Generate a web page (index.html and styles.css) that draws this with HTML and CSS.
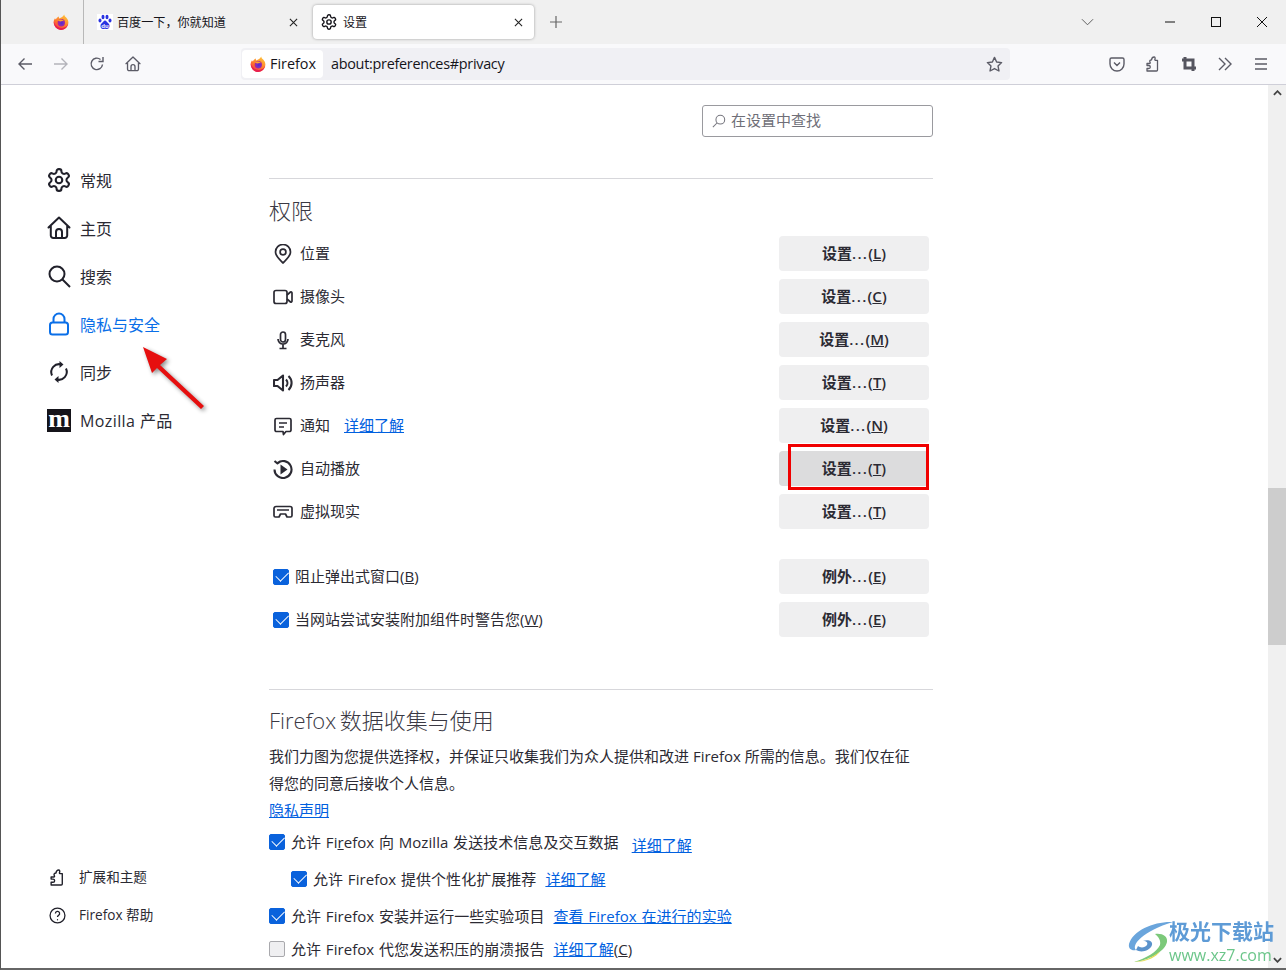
FILE: index.html
```html
<!DOCTYPE html>
<html lang="zh-CN">
<head>
<meta charset="utf-8">
<title>设置</title>
<link rel="stylesheet" href="styles.css">
</head>
<body>
<svg class="defs" width="0" height="0" aria-hidden="true">
  <defs>
    <radialGradient id="ffbody" cx="55%" cy="55%" r="60%"><stop offset="0" stop-color="#4b2fd0"/><stop offset=".55" stop-color="#8a2bb8"/><stop offset="1" stop-color="#c0267c"/></radialGradient>
    <linearGradient id="ffflame" x1="0.800" y1="0" x2="0.200" y2="1"><stop offset="0" stop-color="#ffc93b"/><stop offset=".55" stop-color="#ff7a2c"/><stop offset="1" stop-color="#f5304c"/></linearGradient>
    <symbol id="firefox" viewBox="0 0 16 16">
      <path d="M11.200.400c.2 1.600 1.200 2.300 2.200 3.300 1.400 1.500 2 3.200 2 4.900A7.400 7.400 0 0 1 8 16 7.400 7.400 0 0 1 .6 8.600c0-1.800.6-3.300 1.400-4.400.2.600.5 1 1 1.300C3.300 4 4.500 2.800 6 2.400 5.700 3.200 5.800 3.900 6.300 4.400 8 3.800 10.500 2.200 11.200.400z" fill="url(#ffflame)"/>
      <path d="M.8 8C1 13 5 15.900 8 15.900c3.800 0 6.800-2.700 7.300-6.300-.9 2.600-3.300 4.400-6.300 4.400C5.500 14 2.500 12 .8 8z" fill="#e8204f"/>
      <circle cx="8.300" cy="8.700" r="3.700" fill="url(#ffbody)"/>
      <path d="M4.700 6.300c2-1.400 4.800-1 6.500 1-1.300-.5-2.200-.3-2.900 0-1.200.3-2.700-.1-3.600-1z" fill="#ffa02e"/>
    </symbol>
    <symbol id="gear" viewBox="1 1 22 22">
      <path d="M12.220 2h-.44a2 2 0 0 0-2 2v.18a2 2 0 0 1-1 1.730l-.43.25a2 2 0 0 1-2 0l-.15-.08a2 2 0 0 0-2.730.73l-.22.38a2 2 0 0 0 .73 2.730l.15.1a2 2 0 0 1 1 1.720v.51a2 2 0 0 1-1 1.740l-.15.09a2 2 0 0 0-.73 2.730l.22.38a2 2 0 0 0 2.730.73l.15-.08a2 2 0 0 1 2 0l.43.25a2 2 0 0 1 1 1.730V20a2 2 0 0 0 2 2h.44a2 2 0 0 0 2-2v-.18a2 2 0 0 1 1-1.730l.43-.25a2 2 0 0 1 2 0l.15.08a2 2 0 0 0 2.730-.73l.22-.39a2 2 0 0 0-.73-2.730l-.15-.08a2 2 0 0 1-1-1.740v-.5a2 2 0 0 1 1-1.740l.15-.09a2 2 0 0 0 .73-2.730l-.22-.38a2 2 0 0 0-2.730-.73l-.15.08a2 2 0 0 1-2 0l-.43-.25a2 2 0 0 1-1-1.730V4a2 2 0 0 0-2-2z" fill="none" stroke="currentColor" stroke-width="1.900"/>
      <circle cx="12" cy="12" r="3" fill="none" stroke="currentColor" stroke-width="1.900"/>
    </symbol>
    <symbol id="home" viewBox="0 0 24 24">
      <path d="M1.500 11.500 12 1.500l10.500 10M3.800 9.500V19.500a2.500 2.500 0 0 0 2.500 2.500h11.400a2.500 2.500 0 0 0 2.500-2.500V9.500M9 22V16a3 3 0 0 1 6 0v6" fill="none" stroke="currentColor" stroke-width="2" stroke-linejoin="round" stroke-linecap="round"/>
    </symbol>
    <symbol id="puzzle" viewBox="0 0 16 16">
      <path d="M2 7.500h2.500c.6 0 .9-.6.6-1.100C4.500 5.500 4.500 3.800 6.500 3.800c.3-1.500 1.500-2.800 2.600-2.800 1 0 1.200 1 .9 2l-.2.8c0 .3.2.5.5.5h2.200V14a1 1 0 0 1-1 1H2v-2.500h1.800c1 0 1.500-.8 1.500-1.500S4.800 9.500 3.800 9.500H2z" fill="none" stroke="currentColor" stroke-width="1.300" stroke-linejoin="round"/>
    </symbol>
  </defs>
</svg>

<div class="window">
  <header class="tabbar">
    <div class="tab-pinned">
      <svg class="fav"><use href="#firefox"/></svg>
    </div>
    <div class="tab">
      <svg class="fav" viewBox="0 0 16 16">
        <rect width="16" height="16" fill="#fff"/>
        <g fill="#2932e1">
          <ellipse cx="3" cy="6.500" rx="1.500" ry="2"/><ellipse cx="6" cy="3" rx="1.500" ry="2.200"/><ellipse cx="10" cy="3" rx="1.500" ry="2.200"/><ellipse cx="13" cy="6.500" rx="1.500" ry="2"/>
          <path d="M8 6.500c-1.500 0-2 2-3.500 3-1.500 1-1.500 5.500 1.500 5.500 1 0 1.300-.3 2-.3s1 .3 2 .3c3 0 3-4.500 1.500-5.500C10 8.500 9.500 6.500 8 6.500z"/>
        </g>
        <text class="fav-du" x="8" y="14">du</text>
      </svg>
      <span class="tab-title">百度一下，你就知道</span>
      <svg class="tab-x" viewBox="0 0 10 10"><path d="M1 1l8 8M9 1l-8 8"/></svg>
    </div>
    <div class="tab tab-active">
      <svg class="fav"><use href="#gear"/></svg>
      <span class="tab-title">设置</span>
      <svg class="tab-x" viewBox="0 0 10 10"><path d="M1 1l8 8M9 1l-8 8"/></svg>
    </div>
    <svg class="tab-plus" viewBox="0 0 12 12"><path d="M6 0v12M0 6h12"/></svg>
    <div class="win-controls">
      <svg class="tab-list" viewBox="0 0 14 8"><path d="M1 1l6 6 6-6"/></svg>
      <svg class="win-btn" viewBox="0 0 10 10"><path d="M0 5h10"/></svg>
      <svg class="win-btn" viewBox="0 0 10 10"><rect x=".5" y=".5" width="9" height="9"/></svg>
      <svg class="win-btn" viewBox="0 0 10 10"><path d="M0 0l10 10M10 0L0 10"/></svg>
    </div>
  </header>

  <nav class="toolbar">
    <div class="tool-group">
      <span class="tool"><svg viewBox="0 0 16 16"><path d="M15 8H2M7.500 2.500 2 8l5.500 5.500"/></svg></span>
      <span class="tool tool-off"><svg viewBox="0 0 16 16"><path d="M1 8h13M8.500 2.500 14 8l-5.500 5.500"/></svg></span>
      <span class="tool"><svg viewBox="0 0 16 16"><path d="M13.500 8.500A5.700 5.700 0 1 1 11.500 3.500M14 1v4.500H9.500"/></svg></span>
      <span class="tool"><svg class="tool-use"><use href="#home"/></svg></span>
    </div>
    <div class="urlbar">
      <div class="identity">
        <svg class="fav"><use href="#firefox"/></svg>
        <span>Firefox</span>
      </div>
      <span class="url">about:preferences#privacy</span>
      <svg class="star" viewBox="0 0 16 16"><path d="M8 1.300l2 4.300 4.700.6-3.400 3.200.9 4.700L8 11.800l-4.200 2.300.9-4.700-3.400-3.200 4.700-.6z"/></svg>
    </div>
    <div class="tool-group tool-right">
      <span class="tool"><svg viewBox="0 0 16 16"><path d="M2.500 2h11A1.500 1.500 0 0 1 15 3.500V8a7 7 0 0 1-14 0V3.500A1.500 1.500 0 0 1 2.500 2zM5 6.500l3 3 3-3"/></svg></span>
      <span class="tool"><svg class="tool-use"><use href="#puzzle"/></svg></span>
      <span class="tool"><svg class="crop" viewBox="0 0 16 16"><path d="M4 1v11h11M1 4h11v11"/></svg></span>
      <span class="tool"><svg viewBox="0 0 16 16"><path d="M2 2l6 6-6 6M8 2l6 6-6 6"/></svg></span>
      <span class="tool"><svg viewBox="0 0 16 16"><path d="M2 3h12M2 8h12M2 13h12"/></svg></span>
    </div>
  </nav>

  <div class="content">
    <aside class="sidebar">
      <ul class="cats">
        <li class="cat"><svg class="cat-icon cat-use"><use href="#gear"/></svg><span>常规</span></li>
        <li class="cat"><svg class="cat-icon cat-use"><use href="#home"/></svg><span>主页</span></li>
        <li class="cat"><svg class="cat-icon" viewBox="0 0 24 24"><circle cx="10" cy="10" r="7.500"/><path d="M15.500 15.500 23 23"/></svg><span>搜索</span></li>
        <li class="cat cat-active"><svg class="cat-icon" viewBox="0 0 24 24"><rect x="3" y="10.500" width="18" height="12" rx="2.500"/><path d="M6.500 10.500V7a5.500 5.500 0 0 1 11 0v3.500"/></svg><span>隐私与安全</span></li>
        <li class="cat"><svg class="cat-icon" viewBox="0 0 24 24"><path d="M5 15.500a8 8 0 0 1 9.500-11M19 8.500a8 8 0 0 1-9.500 11"/><path class="solid" d="M12.500 1l4 3.500-4 3.500zM11.500 16l-4 3.500 4 3.500z"/></svg><span>同步</span></li>
        <li class="cat cat-latin"><b class="moz-logo">m</b><span>Mozilla 产品</span></li>
      </ul>
      <ul class="foot">
        <li class="foot-item"><svg class="foot-icon"><use href="#puzzle"/></svg><span>扩展和主题</span></li>
        <li class="foot-item"><svg class="foot-icon" viewBox="0 0 16 16"><circle cx="8" cy="8" r="7"/><path d="M6 6.200a2 2 0 1 1 3 1.700c-.6.400-1 .7-1 1.500"/><circle class="solid" cx="8" cy="12" r=".6"/></svg><span>Firefox 帮助</span></li>
      </ul>
    </aside>

    <main class="prefs">
      <div class="search-row">
        <div class="search">
          <svg viewBox="0 0 16 16"><circle cx="9.500" cy="6.500" r="5"/><path d="M6 10l-5 5"/></svg>
          <span>在设置中查找</span>
        </div>
      </div>

      <hr class="sep sep-first">
      <h2 class="heading heading-first">权限</h2>

      <div class="perm-list">
        <div class="perm">
          <svg class="perm-icon" viewBox="1.500 0 17 20"><path d="M10 19c-1-1.700-7.500-6-7.500-11a7.500 7.500 0 0 1 15 0c0 5-6.500 9.300-7.500 11z"/><circle cx="10" cy="8" r="2.900"/></svg>
          <span>位置</span><button class="btn">设置<i>...</i>(<u>L</u>)</button>
        </div>
        <div class="perm">
          <svg class="perm-icon" viewBox="0 0 20 20"><rect x="1" y="3.500" width="13" height="13" rx="2"/><path d="M14 8l3.500-3c.6-.3 1.500 0 1.500 1v8c0 1-.9 1.300-1.500 1L14 12"/></svg>
          <span>摄像头</span><button class="btn">设置<i>...</i>(<u>C</u>)</button>
        </div>
        <div class="perm">
          <svg class="perm-icon" viewBox="0 0 20 20"><rect x="7.500" y="2" width="5" height="10" rx="2.500"/><path d="M5 9a5 5 0 0 0 10 0M10 14v4M6.500 18.500h7"/></svg>
          <span>麦克风</span><button class="btn">设置<i>...</i>(<u>M</u>)</button>
        </div>
        <div class="perm">
          <svg class="perm-icon perm-icon-bold" viewBox="0 0 20 20"><path d="M1 7h3.500L10 2.500v15L4.500 13H1zM13 6.500a5 5 0 0 1 0 7M15.500 3a9.500 9.500 0 0 1 0 14"/></svg>
          <span>扬声器</span><button class="btn">设置<i>...</i>(<u>T</u>)</button>
        </div>
        <div class="perm">
          <svg class="perm-icon" viewBox="0 0 20 20"><path d="M3.500 2.500h13A1.500 1.500 0 0 1 18 4v10a1.500 1.500 0 0 1-1.500 1.500H13L10.500 18.500 10 15.500H3.500A1.500 1.500 0 0 1 2 14V4a1.500 1.500 0 0 1 1.500-1.500zM6 7h8M6 11h5"/></svg>
          <span>通知</span><a class="link perm-link">详细了解</a><button class="btn">设置<i>...</i>(<u>N</u>)</button>
        </div>
        <div class="perm">
          <svg class="perm-icon perm-icon-bold" viewBox="0 0 20 20"><path d="M4.500 4a8.500 8.500 0 1 1-3 6.500M1.500 2l3 2.500L7.500 2.500"/><path class="solid" d="M7.500 5.500l7 5-7 5z"/></svg>
          <span>自动播放</span><button class="btn btn-pressed">设置<i>...</i>(<u>T</u>)</button>
        </div>
        <div class="perm">
          <svg class="perm-icon" viewBox="0 0 20 20"><path d="M3 4.500h14a2 2 0 0 1 2 2v7a1.500 1.500 0 0 1-1.500 1.500H14l-1.500-3h-5L6 15H2.500A1.500 1.500 0 0 1 1 13.500v-7a2 2 0 0 1 2-2zM4 8h12"/></svg>
          <span>虚拟现实</span><button class="btn">设置<i>...</i>(<u>T</u>)</button>
        </div>
      </div>

      <div class="perm-list perm-checks">
        <div class="perm">
          <span class="check on"></span>
          <span>阻止弹出式窗口(<u>B</u>)</span><button class="btn">例外<i>...</i>(<u>E</u>)</button>
        </div>
        <div class="perm">
          <span class="check on"></span>
          <span>当网站尝试安装附加组件时警告您(<u>W</u>)</span><button class="btn">例外<i>...</i>(<u>E</u>)</button>
        </div>
      </div>

      <hr class="sep sep-second">
      <h2 class="heading">Firefox 数据收集与使用</h2>
      <p class="para">我们力图为您提供选择权，并保证只收集我们为众人提供和改进 Firefox 所需的信息。我们仅在征得您的同意后接收个人信息。</p>
      <a class="link link-block">隐私声明</a>

      <div class="opt opt-a">
        <span class="check on"></span>
        <span>允许 Fi<u>r</u>efox 向 Mozilla 发送技术信息及交互数据</span>
        <a class="link opt-link-low">详细了解</a>
      </div>
      <div class="opt opt-b">
        <span class="check on"></span>
        <span>允许 Firefox 提供个性化扩展推荐</span>
        <a class="link">详细了解</a>
      </div>
      <div class="opt opt-c">
        <span class="check on"></span>
        <span>允许 Firefox 安装并运行一些实验项目</span>
        <a class="link">查看 Firefox 在进行的实验</a>
      </div>
      <div class="opt opt-d">
        <span class="check"></span>
        <span>允许 Firefox 代您发送积压的崩溃报告</span>
        <span><a class="link">详细了解</a>(<u>C</u>)</span>
      </div>
    </main>

    <div class="scrollbar">
      <svg class="arrow" viewBox="0 0 10 6"><path d="M1 5l4-4 4 4"/></svg>
      <div class="thumb"></div>
      <svg class="arrow arrow-down" viewBox="0 0 10 6"><path d="M1 1l4 4 4-4"/></svg>
    </div>
  </div>

  <div class="red-box"></div>
  <svg class="red-arrow" viewBox="0 0 80 80">
    <path d="M7 7 L31 19 L24 25 L68 66 L65 69 L21 28 L16 33 Z"/>
  </svg>
  <div class="mark">
    <svg class="mark-logo" viewBox="0 0 50 44">
      <path d="M46 2C28 1 6 10 2 24c-1 5 3 7 7 6C4 25 16 11 46 2z" fill="#6aa5dc"/>
      <path d="M9 30c5 3 14 1 16-5 1-4-4-6-9-4 4 0 5 2 4 4-2 3-7 3-9 1z" fill="#5b93cc"/>
      <path d="M28 14c7-1 13 2 12 8-2 10-20 19-33 20 12-4 23-10 26-17 1-4-1-8-5-11z" fill="#7cc97a"/>
      <path d="M7 42c10-1 20-5 26-11-3 6-13 11-26 11z" fill="#e4dc52"/>
    </svg>
    <div class="mark-text">
      <span class="mark-cn">极光下载站</span>
      <span class="mark-en">www.xz7.com</span>
    </div>
  </div>
</div>
</body>
</html>
```
FILE: styles.css
```css
* { box-sizing: border-box; }
html, body { margin: 0; padding: 0; background: #fff; }
body {
  font-family: "Open Sans", "Noto Sans CJK SC", sans-serif;
  color: #2b2a33;
  overflow: hidden;
}
ul { list-style: none; margin: 0; padding: 0; }
.defs { position: absolute; }
.window {
  position: relative;
  width: 1286px;
  height: 970px;
  display: flex;
  flex-direction: column;
  overflow: hidden;
  border-left: 1px solid #555;
  border-bottom: 2px solid #666;
}

/* tab strip */
.tabbar {
  height: 44px;
  flex: none;
  display: flex;
  align-items: center;
  background: #f0f0f0;
  font-size: 12.100px;
  color: #15141a;
}
.fav { width: 16px; height: 16px; flex: none; }
.tab-pinned {
  width: 83px;
  height: 44px;
  display: flex;
  align-items: center;
  justify-content: flex-end;
  padding-right: 14px;
  border-right: 1px solid #b8b8b8;
}
.tab {
  width: 229px;
  height: 34px;
  display: flex;
  align-items: center;
  padding: 0 0 0 13px;
  gap: 4px;
}
.tab-title { flex: 1; white-space: nowrap; }
.tab-x { width: 9px; height: 9px; margin-right: 15px; fill: none; stroke: #222; stroke-width: 1.200; }
.tab-active {
  width: 221px;
  background: #fff;
  border-radius: 4px;
  box-shadow: 0 0 3px rgba(0, 0, 0, .35);
  padding-left: 8px;
  gap: 5px;
  color: #15141a;
}
.tab-active .tab-x { margin-right: 11px; }
.tab-active .fav { margin-right: 1px; }
.tab-plus { width: 12px; height: 12px; margin-left: 16px; fill: none; stroke: #666; stroke-width: 1.200; }
.win-controls { margin-left: auto; display: flex; align-items: center; }
.tab-list { width: 13px; height: 8px; margin-right: 71px; fill: none; stroke: #555; stroke-width: 1; }
.win-btn { width: 10px; height: 10px; margin-right: 36px; fill: none; stroke: #111; stroke-width: 1; }
.win-btn:last-child { margin-right: 19px; }

/* toolbar */
.toolbar {
  height: 41px;
  flex: none;
  display: flex;
  align-items: center;
  background: #f9f9fb;
  border-bottom: 1px solid #cfcfd8;
  padding-left: 6px;
}
.tool-group { display: flex; }
.tool {
  width: 36px;
  height: 32px;
  display: flex;
  align-items: center;
  justify-content: center;
  color: #5b5b66;
}
.tool svg { width: 16px; height: 16px; fill: none; stroke: #5b5b66; stroke-width: 1.400; }
.tool .tool-use { stroke: none; }
.tool svg.crop { stroke-width: 3; stroke: #55555f; }
.tool-off svg { stroke: #b4b4bb; }
.urlbar {
  width: 769px;
  height: 32px;
  margin-left: 90px;
  display: flex;
  align-items: center;
  background: #f0f0f4;
  border-radius: 4px;
  padding-left: 1px;
  font-size: 14.400px;
  color: #15141a;
}
.identity {
  width: 81px;
  height: 28px;
  display: flex;
  align-items: center;
  gap: 4px;
  padding-left: 8px;
  background: #fff;
  border-radius: 4px;
}
.identity span, .url { padding-bottom: 2px; }
.url { margin-left: 8px; flex: 1; letter-spacing: -.28px; }
.star { width: 17px; height: 17px; margin-right: 7px; fill: none; stroke: #5b5b66; stroke-width: 1.300; stroke-linejoin: round; }
.tool-right { margin-left: 89px; }

/* content */
.content { flex: 1; min-height: 0; display: flex; }
.sidebar {
  width: 268px;
  flex: none;
  display: flex;
  flex-direction: column;
  padding: 71px 0 34px 46px;
}
.cat {
  height: 48px;
  display: flex;
  align-items: center;
  gap: 9px;
  font-size: 16px;
  color: #2b2a33;
}
.cat > span { padding-bottom: 1px; }
.cat-latin > span { letter-spacing: .4px; }
.cat-icon { width: 24px; height: 24px; flex: none; fill: none; stroke: currentColor; stroke-width: 2; color: #20202a; }
.cat-use { stroke: none; }
.cat-icon .solid { fill: currentColor; stroke: none; }
.cat-active, .cat-active .cat-icon { color: #0a6fe8; }
.moz-logo {
  width: 24px;
  height: 23px;
  flex: none;
  background: #15141a;
  color: #fff;
  font-family: "Liberation Serif", serif;
  font-weight: 700;
  font-size: 26px;
  line-height: 20px;
  text-align: center;
}
.foot { margin-top: auto; }
.foot-item {
  height: 38px;
  display: flex;
  align-items: center;
  gap: 13px;
  font-size: 13.600px;
  padding-left: 2px;
  color: #2b2a33;
}
.foot-item > span { padding-bottom: 2px; }
.foot-icon { width: 17px; height: 17px; flex: none; fill: none; stroke: #20202a; stroke-width: 1.200; color: #20202a; }
.foot-icon .solid { fill: #20202a; stroke: none; }

/* main column */
.prefs { width: 664px; flex: none; padding-top: 20px; font-size: 15px; color: #2b2a33; }
.search-row { display: flex; justify-content: flex-end; }
.search {
  width: 231px;
  height: 32px;
  display: flex;
  align-items: center;
  gap: 5px;
  padding-left: 9px;
  border: 1px solid #9a9a9f;
  border-radius: 3px;
  color: #6f6f78;
  font-size: 15px;
}
.search span { padding-bottom: 4px; }
.search svg { width: 14px; height: 14px; fill: none; stroke: #77777f; stroke-width: 1.200; }
.sep { border: 0; border-top: 1px solid #d7d7db; margin: 0; }
.sep-first { margin-top: 41px; }
.sep-second { margin-top: 52px; }
.heading { margin: 15px 0 0; font-size: 22px; line-height: 30px; font-weight: 300; color: #3a3944; word-spacing: -2px; }
.heading-first { margin-top: 16px; margin-bottom: -1px; }
.perm-list { margin-top: 12px; display: flex; flex-direction: column; gap: 8px; padding-left: 4px; }
.perm-checks { margin-top: 30px; }
.perm { height: 35px; display: flex; align-items: center; white-space: nowrap; }
.perm > span:not(.check), .perm > .link { padding-bottom: 2px; }
.perm-icon { width: 20px; height: 20px; flex: none; margin-right: 7px; fill: none; stroke: #2b2a33; stroke-width: 1.700; stroke-linejoin: round; }
.perm-icon-bold { stroke-width: 2.100; }
.perm-icon .solid { fill: #2b2a33; stroke: none; }
.perm-link { margin-left: 14px; }
.perm .check { margin-right: 6px; }
.btn {
  margin-left: auto;
  margin-right: 4px;
  width: 150px;
  height: 35px;
  border: 0;
  border-radius: 4px;
  background: #efeff0;
  color: #2b2a33;
  font: 600 15px "Open Sans", "Noto Sans CJK SC", sans-serif;
  padding: 0 0 2px;
}
.btn i { font-style: normal; letter-spacing: 1.300px; }
.btn-pressed { background: #dcdcdd; }
.link { color: #0060df; text-decoration: underline; white-space: nowrap; }
.para { margin: 8px 0 0; line-height: 26.500px; max-width: 650px; }
.link-block { display: block; line-height: 27px; margin-top: 1px; }
.check {
  width: 16px;
  height: 16px;
  flex: none;
  display: inline-block;
  position: relative;
  border-radius: 2px;
  background: #efeff1;
  border: 1px solid #a9a9ad;
}
.check.on { background: #0a62dc; border-color: #0a62dc; }
.check.on::after {
  content: "";
  position: absolute;
  left: 1.500px;
  top: 1.500px;
  width: 11px;
  height: 6.500px;
  border-left: 1.600px solid #fff;
  border-bottom: 1.600px solid #fff;
  transform: rotate(-45deg) scale(1, .9);
}
.opt { display: flex; align-items: center; white-space: nowrap; height: 32px; gap: 6px; word-spacing: .8px; letter-spacing: .05px; }
.opt .check { margin-top: 1px; }
.opt-a { margin-top: 1px; }
.opt-a .link { margin-left: 7px; }
.opt-link-low { position: relative; top: 3px; }
.opt-b { margin-top: 5px; padding-left: 22px; }
.opt-b .link { margin-left: 3px; }
.opt-c { margin-top: 5px; }
.opt-c .link { margin-left: 3px; }
.opt-d { margin-top: 1px; }
.opt-d > span:last-child { margin-left: 3px; }

/* scrollbar */
.scrollbar {
  width: 18px;
  margin-left: auto;
  flex: none;
  display: flex;
  flex-direction: column;
  background: #f0f0f0;
  position: relative;
}
.arrow { width: 9px; height: 6px; margin: 5px auto 0; fill: none; stroke: #444; stroke-width: 2; flex: none; }
.arrow-down { margin: auto auto 5px; }
.thumb { height: 157px; margin-top: 392px; background: #cdcdcd; flex: none; }

/* annotations laid over the page */
.red-box {
  position: absolute;
  left: 787px;
  top: 444px;
  width: 141px;
  height: 46px;
  border: 3px solid #f00000;
}
.red-arrow {
  position: absolute;
  left: 135px;
  top: 340px;
  width: 80px;
  height: 80px;
  fill: #e60f0f;
  filter: drop-shadow(2px 2px 2px rgba(0, 0, 0, .45));
}
.mark {
  position: absolute;
  left: 1126px;
  top: 917px;
  display: flex;
  align-items: flex-start;
  filter: blur(.35px);
}
.mark-logo { width: 50px; height: 44px; flex: none; margin-top: 3px; }
.mark-text { display: flex; flex-direction: column; margin-left: -8px; }
.mark-cn { font: 700 21px/27px "Noto Sans CJK SC", sans-serif; color: #5e9bd6; white-space: nowrap; }
.mark-en { font: 500 16px/22px "Open Sans", sans-serif; color: #6cc68a; white-space: nowrap; }
.fav-du { font: 700 6px "Liberation Sans", sans-serif; fill: #fff; text-anchor: middle; }
```
